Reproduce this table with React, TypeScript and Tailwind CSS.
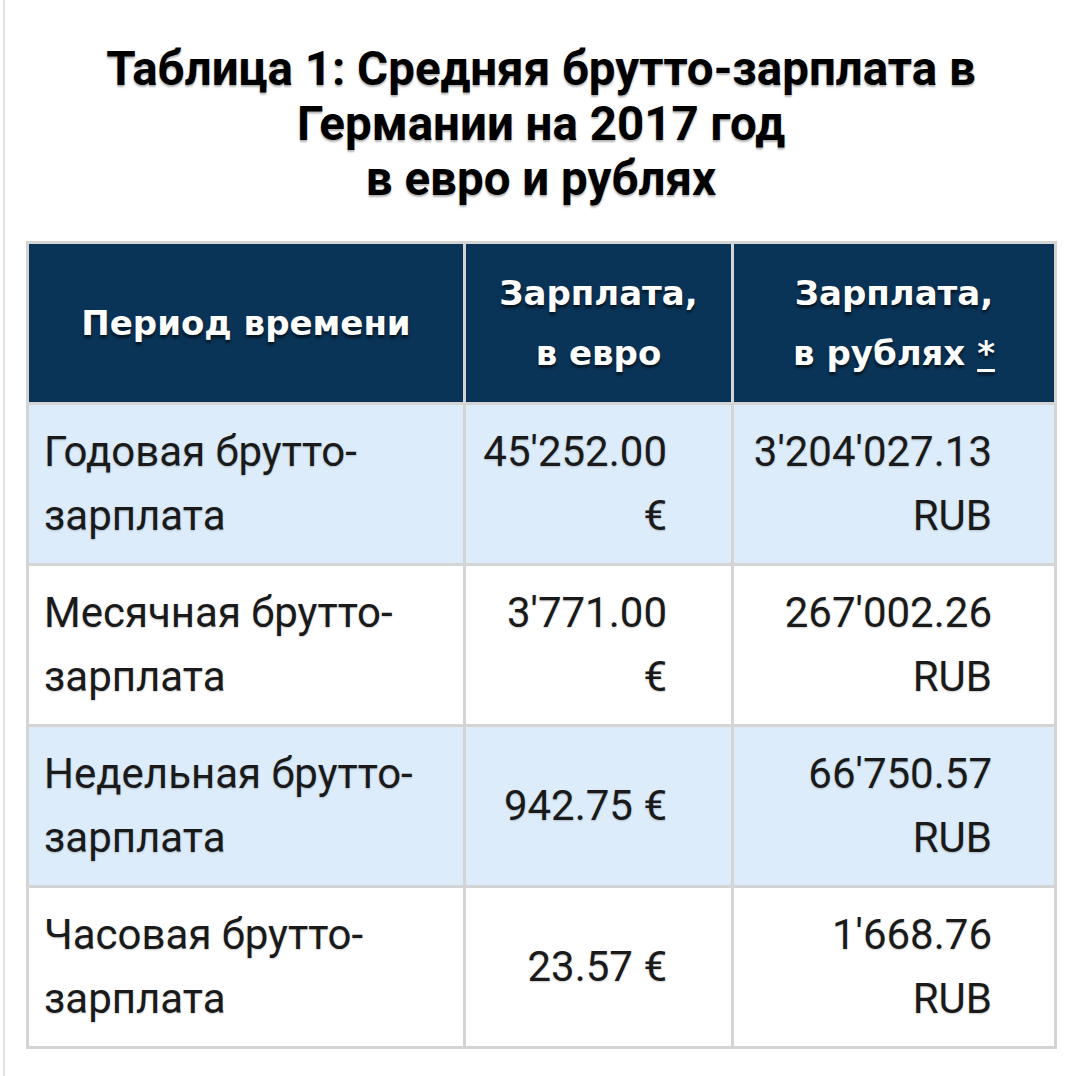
const rows = [
  { period: ["Годовая брутто-", "зарплата"], eur: ["45'252.00", "€"], rub: ["3'204'027.13", "RUB"], shade: true },
  { period: ["Месячная брутто-", "зарплата"], eur: ["3'771.00", "€"], rub: ["267'002.26", "RUB"], shade: false },
  { period: ["Недельная брутто-", "зарплата"], eur: ["942.75 €"], rub: ["66'750.57", "RUB"], shade: true },
  { period: ["Часовая брутто-", "зарплата"], eur: ["23.57 €"], rub: ["1'668.76", "RUB"], shade: false },
]

function Lines({ items }: { items: string[] }) {
  return (
    <>
      {items.map((t, i) => (
        <div key={i} className="whitespace-nowrap">
          {t}
        </div>
      ))}
    </>
  )
}

export default function App() {
  return (
    <div
      className="w-[1080px] h-[1076px] bg-white overflow-hidden"
      style={{ fontFamily: "Roboto, 'Noto Sans', sans-serif" }}
    >
      <div className="ml-[3px] h-full border-l-2 border-[#e2e2e2] pl-[21px] pr-[24px] pt-[42px]">
        <h1 className="text-center text-[47.5px] leading-[55px] font-bold text-black [text-shadow:0_2px_2px_rgba(0,0,0,0.3)]">
          Таблица 1: Средняя брутто-зарплата в
          <br />
          Германии на 2017 год
          <br />
          в евро и рублях
        </h1>

        <table className="mt-[34px] w-[1028px] border-collapse border-[3px] border-[#d4d4d4] table-fixed">
          <colgroup>
            <col className="w-[437px]" />
            <col className="w-[268px]" />
            <col className="w-[323px]" />
          </colgroup>
          <thead>
            <tr
              className="h-[161px] bg-[#0a3457] text-white font-bold text-[34px] leading-[60px] [text-shadow:0_3px_3px_rgba(0,0,0,0.6)]"
              style={{ fontFamily: "'DejaVu Sans', sans-serif" }}
            >
              <th className="border-[3px] border-[#d4d4d4] text-center align-middle">Период времени</th>
              <th className="border-[3px] border-[#d4d4d4] text-center align-middle">
                <div>Зарплата,</div>
                <div>в евро</div>
              </th>
              <th className="border-[3px] border-[#d4d4d4] text-center align-middle">
                <div>Зарплата,</div>
                <div>
                  в рублях <span className="underline underline-offset-4">*</span>
                </div>
              </th>
            </tr>
          </thead>
          <tbody className="text-[42px] leading-[64px] text-[#1a1a1a] [text-shadow:0_1px_2px_rgba(0,0,0,0.2)]">
            {rows.map((r, i) => (
              <tr key={i} className={"h-[161px] " + (r.shade ? "bg-[#dcecfb]" : "bg-white")}>
                <td className="border-[3px] border-[#d4d4d4] pl-[15px] align-middle">
                  <Lines items={r.period} />
                </td>
                <td className="border-[3px] border-[#d4d4d4] pr-[64px] text-right align-middle">
                  <Lines items={r.eur} />
                </td>
                <td className="border-[3px] border-[#d4d4d4] pr-[62px] text-right align-middle">
                  <Lines items={r.rub} />
                </td>
              </tr>
            ))}
          </tbody>
        </table>
      </div>
    </div>
  )
}
